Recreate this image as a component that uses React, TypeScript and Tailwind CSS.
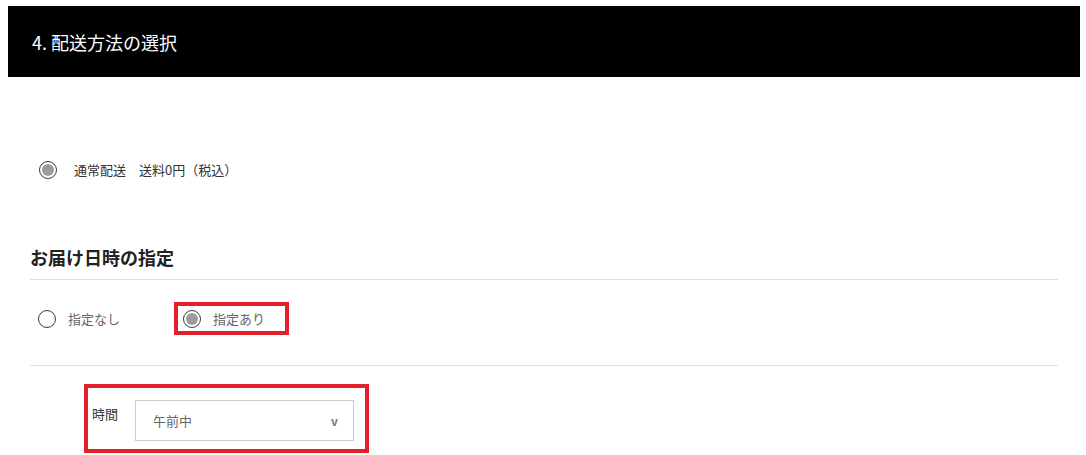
import { useState } from "react";

function Radio({ checked }: { checked: boolean }) {
  return (
    <span className="w-[18px] h-[18px] rounded-full border border-[#3a3a3a] bg-white flex items-center justify-center shrink-0">
      {checked && <span className="w-[12px] h-[12px] rounded-full bg-[#9c9c9c]"></span>}
    </span>
  );
}

export default function App() {
  const [when, setWhen] = useState<"none" | "set">("set");

  return (
    <div className="w-[1086px] h-[455px] bg-white overflow-hidden font-['Meiryo','Noto_Sans_CJK_JP',sans-serif]">
      {/* section header */}
      <div className="ml-2 mr-[6px] mt-[6px] h-[71px] bg-black flex items-center pl-6">
        <h2 className="text-white text-[18px] leading-none">4. 配送方法の選択</h2>
      </div>

      <div className="ml-[30px] w-[1028px]">
        {/* shipping method */}
        <label className="mt-[84px] ml-[9px] flex items-center gap-[17px] h-[18px]">
          <Radio checked />
          <span className="text-[13px] text-[#333]">通常配送　送料0円（税込）</span>
        </label>

        {/* delivery date */}
        <div className="mt-[66px] border-b border-[#dedede] pb-[10px]">
          <h3 className="text-[18px] leading-[24px] font-bold text-[#222]">お届け日時の指定</h3>
        </div>

        <div className="border-b border-[#dedede] pt-[22px] pb-[30px] flex items-center">
          <button
            onClick={() => setWhen("none")}
            className="w-[144px] pl-[8px] flex items-center gap-[12px] h-[33px]"
          >
            <Radio checked={when === "none"} />
            <span className="text-[13px] text-[#666]">指定なし</span>
          </button>
          <button
            onClick={() => setWhen("set")}
            className="w-[115px] h-[33px] border-4 border-[#e4202c] pl-[5px] flex items-center gap-[12px]"
          >
            <Radio checked={when === "set"} />
            <span className="text-[13px] text-[#666]">指定あり</span>
          </button>
        </div>

        {/* time slot */}
        <div className="mt-[18px] ml-[54px] w-[285px] h-[69px] border-4 border-[#e4202c] pl-[4px] pt-[12px] flex items-start">
          <span className="w-[43px] mt-[4px] text-[13px] text-[#333]">時間</span>
          <div className="w-[219px] h-[41px] border border-[#cccccc] flex items-center justify-between pl-[17px] pr-[15px] text-[13px] text-[#666]">
            <span>午前中</span>
            <span className="text-[12px] font-bold text-[#777]">v</span>
          </div>
        </div>
      </div>
    </div>
  );
}
